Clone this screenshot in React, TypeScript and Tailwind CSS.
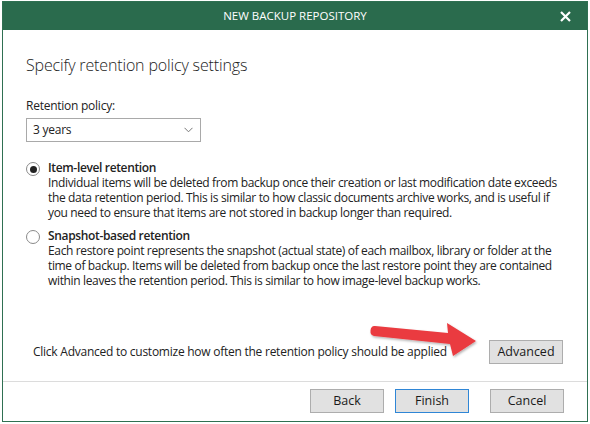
import React, { useState } from 'react'

type Option = {
  id: string
  label: string
  lines: string[]
}

const options: Option[] = [
  {
    id: 'item',
    label: 'Item-level retention',
    lines: [
      'Individual items will be deleted from backup once their creation or last modification date exceeds',
      'the data retention period. This is similar to how classic documents archive works, and is useful if',
      'you need to ensure that items are not stored in backup longer than required.',
    ],
  },
  {
    id: 'snapshot',
    label: 'Snapshot-based retention',
    lines: [
      'Each restore point represents the snapshot (actual state) of each mailbox, library or folder at the',
      'time of backup. Items will be deleted from backup once the last restore point they are contained',
      'within leaves the retention period. This is similar to how image-level backup works.',
    ],
  },
]

function Radio({ checked }: { checked: boolean }) {
  return (
    <span className="flex h-[14px] w-[14px] shrink-0 items-center justify-center rounded-full border border-[#8a8a8a] bg-white">
      {checked ? <span className="h-[7px] w-[7px] rounded-full bg-[#222]" /> : null}
    </span>
  )
}

function Button({ children, primary, className }: { children: React.ReactNode; primary?: boolean; className?: string }) {
  return (
    <button
      type="button"
      className={
        (primary
          ? 'h-[24px] w-[74px] border border-[#2f86d6] bg-[#e1e1e1] text-[12.5px] text-[#1a1a1a] '
          : 'h-[24px] w-[74px] border border-[#adadad] bg-[#e1e1e1] text-[12.5px] text-[#1a1a1a] ') + (className ?? '')
      }
    >
      {children}
    </button>
  )
}

export default function App() {
  const [policy, setPolicy] = useState('item')

  return (
    <div
      className="relative h-[424px] w-[590px] bg-white pl-[2px] pt-[1px]"
      style={{ fontFamily: '"Open Sans", "Noto Sans", sans-serif' }}
    >
      <div className="flex h-[421px] w-[586px] flex-col border border-[#2f7052]">
        <div className="relative flex h-[28px] shrink-0 items-center justify-center bg-[#2a6b4d] text-[11.5px] text-white">
          NEW BACKUP REPOSITORY
          <svg className="absolute right-[16px] top-[9px]" width="11" height="11" viewBox="0 0 11 11">
            <path d="M1 1 L10 10 M10 1 L1 10" stroke="white" strokeWidth="2.2" />
          </svg>
        </div>

        <div className="flex flex-1 flex-col pl-[23px] pr-[24px]">
          <h1 className="mt-[24px] text-[16px] font-light leading-[22px] tracking-[-0.15px] text-[#222]">
            Specify retention policy settings
          </h1>

          <p className="mt-[22px] text-[12px] leading-[16px] tracking-[-0.25px] text-[#222]">Retention policy:</p>
          <div className="mt-[4px] flex h-[24px] w-[175px] items-center justify-between border border-[#a9a9a9] pl-[6px] pr-[7px] text-[12px] tracking-[-0.25px] text-[#222]">
            <span>3 years</span>
            <svg width="9" height="6" viewBox="0 0 9 6">
              <path d="M0.5 0.8 L4.5 4.8 L8.5 0.8" fill="none" stroke="#777" strokeWidth="1" />
            </svg>
          </div>

          <div className="mt-[18px] flex flex-col gap-[8px]">
            {options.map((opt) => (
              <div key={opt.id} className="flex cursor-pointer gap-[8px]" onClick={() => setPolicy(opt.id)}>
                <div className="pt-[2px]">
                  <Radio checked={policy === opt.id} />
                </div>
                <div className="text-[12px] leading-[15px] tracking-[-0.35px] text-[#222]">
                  <div className="font-semibold">{opt.label}</div>
                  {opt.lines.map((line) => (
                    <div key={line} className="whitespace-nowrap">
                      {line}
                    </div>
                  ))}
                </div>
              </div>
            ))}
          </div>

          <div className="mt-auto mb-[17px] flex items-center justify-between pl-[7px]">
            <span className="text-[12px] tracking-[-0.25px] text-[#222]">
              Click Advanced to customize how often the retention policy should be applied
            </span>
            <Button>Advanced</Button>
          </div>
        </div>

        <div className="flex h-[40px] shrink-0 items-start justify-end border-t border-[#dcdcdc] pr-[23px] pt-[7px]">
          <Button>Back</Button>
          <Button primary className="ml-[11px]">
            Finish
          </Button>
          <Button className="ml-[21px]">Cancel</Button>
        </div>
      </div>

      <svg className="pointer-events-none absolute left-[367px] top-[318px]" width="116" height="44" viewBox="0 0 116 44">
        <defs>
          <filter id="sh" x="-10%" y="-20%" width="130%" height="150%">
            <feDropShadow dx="1" dy="1.5" stdDeviation="1.2" floodColor="#000" floodOpacity="0.3" />
          </filter>
        </defs>
        <path
          d="M8 8 L81 15 L80 5 L109 23 L86 38 L83 26 L7 18 Q3 17 3.5 12.5 Q4 7.5 8 8 Z"
          fill="#ea3b3f"
          filter="url(#sh)"
        />
      </svg>
    </div>
  )
}
